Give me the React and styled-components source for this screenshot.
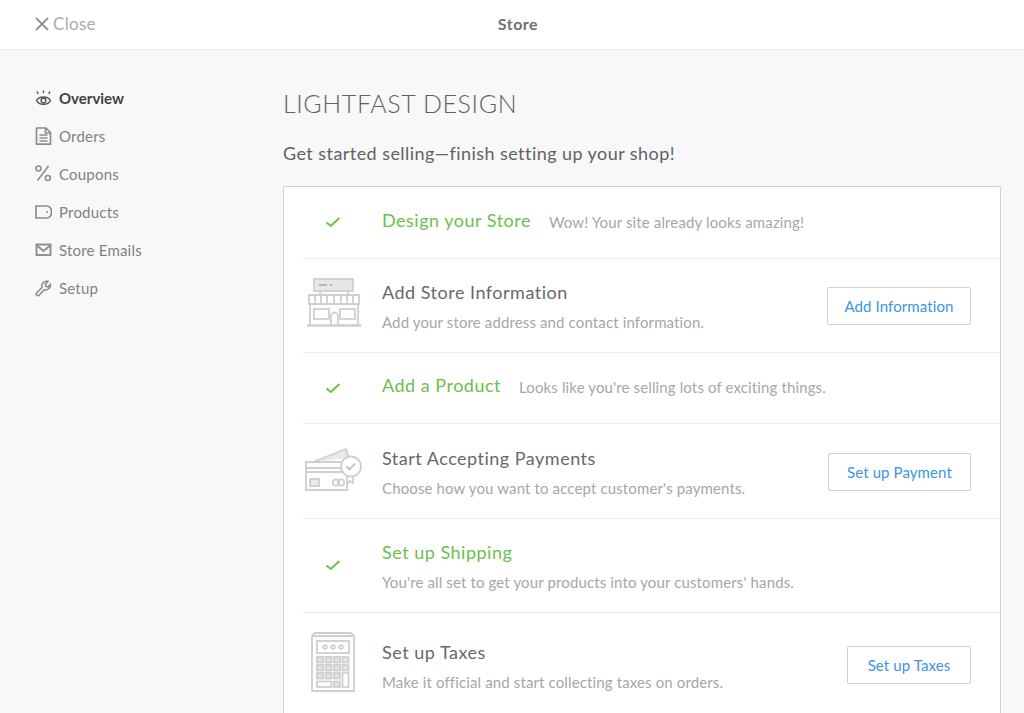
import React from "react";
import styled, { createGlobalStyle } from "styled-components";

const Global = createGlobalStyle`
  html, body { margin: 0; padding: 0; height: 713px; overflow: hidden; background: #f8f8f9; }
  body { font-family: "Lato", "Open Sans", sans-serif; -webkit-font-smoothing: antialiased; }
  #root { height: 713px; overflow: hidden; }
`;
const Page = styled.div`display:flex;flex-direction:column;height:713px;overflow:hidden;`;
const Header = styled.header`
  flex: none; background: #fff; border-bottom: 1px solid #ebecec; position: relative;
  display: flex; align-items: center; justify-content: center; padding: 0 0 3px 12px; box-sizing: content-box;
  height: 46px;
`;
const CloseLink = styled.div`
  position: absolute; left: 35px; top: 0; height: 47px; display: flex; align-items: center; gap: 4px;
  color: #a9abad; font-size: 17px; letter-spacing: .3px;
`;
const Title = styled.div`font-size: 16px; font-weight: 700; color: #6f7173; letter-spacing: .5px;`;
const Body = styled.div`display:flex;flex:1;min-height:0;`;
const Side = styled.nav`
  width: 283px; flex: none; padding: 29px 0 0 35px; box-sizing: border-box; display:flex; flex-direction:column;
`;
const NavItem = styled.div`
  height: 38px; display: flex; align-items: center; gap: 7px; font-size: 15px;
  letter-spacing: ${p => (p.$active ? "0" : ".2px")};
  color: ${p => (p.$active ? "#3f4244" : "#7f8285")}; font-weight: ${p => (p.$active ? 700 : 400)};
  svg { width: 17px; height: 18px; flex: none; }
`;
const Main = styled.main`flex:1;min-width:0;padding-right:23px;`;
const Shop = styled.h1`
  margin: 37px 0 0; font-size: 25px; line-height: 32px; font-weight: 300; color: #5f6265; letter-spacing: .6px;
`;
const Lead = styled.p`
  margin: 22px 0 0; font-size: 18px; line-height: 24px; color: #5f6265; letter-spacing: .44px;
`;
const Card = styled.section`
  margin-top: 21px; background: #fff; border: 1px solid #cfd1d3; border-bottom: 0; border-radius: 2px 2px 0 0; padding-left: 19px;
`;
const Row = styled.div`
  display: flex; align-items: center; height: ${p => p.$h}px; padding-right: 29px;
  border-bottom: 1px solid #ebecec; box-sizing: border-box;
  &:last-child { border-bottom: 0; }
`;
const IconCell = styled.div`
  width: 79px; flex: none; display:flex; align-items:center; box-sizing:border-box;
  padding-left: ${p => p.$pad || 0}px; padding-bottom: ${p => p.$lift || 0}px;
`;
const Text = styled.div`flex: 1; min-width: 0; padding-top: 1px;`;
const Inline = styled.div`display:flex;align-items:flex-start;gap:18px;margin:-3px 0 4px;`;
const Heading = styled.div`
  font-size: 18px; line-height: 24px; letter-spacing: .5px;
  color: ${p => (p.$done ? "#6cc04a" : "#66696c")};
`;
const Note = styled.div`
  font-size: 15px; line-height: 20px; color: #a5a7a9; letter-spacing: .13px; margin-top: ${p => p.$mt || 0}px;
`;
const Button = styled.button`
  height: 38px; padding: 0; width: ${p => p.$w}px; flex: none; background: #fff; border: 1px solid #ccd3dc; border-radius: 2px;
  color: #3a96e0; font: 400 15px "Lato", sans-serif; letter-spacing: .1px; margin-top: ${p => p.$down || 0}px;
`;

const Check = () => (
  <svg width="16" height="12" viewBox="0 0 16 12" fill="none" stroke="#6cc04a" strokeWidth="2">
    <path d="M1.5 6.5 L5.8 10 L14.5 2" />
  </svg>
);
const iconStroke = { fill: "none", stroke: "#8b8e91", strokeWidth: 1.6 };
const Eye = () => (
  <svg viewBox="0 0 17 18" {...iconStroke} stroke="#55585a">
    <path d="M1.5 11.5 C4 6.8 13 6.8 15.5 11.5 C13 16.6 4 16.6 1.5 11.5Z" strokeWidth="1.5" />
    <circle cx="8.5" cy="11.6" r="2.4" strokeWidth="1.4" />
    <path d="M8.5 1.5v2.6M2 2.5l1.2 2.4M15 2.5l-1.2 2.4" strokeWidth="1.4" />
  </svg>
);
const Doc = () => (
  <svg viewBox="0 0 17 18" {...iconStroke}>
    <path d="M1.5 1h9.5l4.5 4.5v11.7h-14z M10.5 1.2v4.8h5 M4.5 8h8M4.5 11h8M4.5 14h8" strokeWidth="1.7" />
  </svg>
);
const Percent = () => (
  <svg viewBox="0 0 17 18" {...iconStroke}>
    <circle cx="3.5" cy="3.5" r="2.5" /><circle cx="12.8" cy="13" r="2.5" /><path d="M13.5 1L2.5 15.5" strokeWidth="1.7" />
  </svg>
);
const Tag = () => (
  <svg viewBox="0 0 17 18" {...iconStroke}>
    <path d="M1 3h11c3 .4 4.5 3.2 4.5 6s-1.5 5.6-4.5 6H1z" strokeWidth="1.7" /><circle cx="12" cy="9" r="1" fill="#8b8e91" stroke="none" />
  </svg>
);
const Mail = () => (
  <svg viewBox="0 0 17 18" {...iconStroke} strokeWidth="1.9">
    <rect x="1.5" y="3.5" width="14" height="10.5" /><path d="M2 4.5l6.5 5.5 6.5-5.5" />
  </svg>
);
const Wrench = () => (
  <svg viewBox="0 0 17 18" {...iconStroke}>
    <path d="M1.3 14.2 L7 8.6 C5.8 4.8 9 1.4 13 2.4 L10.4 5.2 L10.8 7.4 L13 7.8 L15.3 5.4 C15.8 9 12.6 11.6 9.2 10.8 L4 16.4 C2.7 17.4 .4 15.6 1.3 14.2Z" />
  </svg>
);
const X = () => (
  <svg width="14" height="14" viewBox="0 0 14 14" stroke="#8f9193" strokeWidth="1.8"><path d="M1 1l12 12M13 1L1 13" /></svg>
);

const g = { fill: "none", stroke: "#cdcfd1", strokeWidth: 1.8 };
const StoreArt = () => (
  <svg width="54" height="50" viewBox="0 0 54 50" {...g}>
    <rect x="7" y="1" width="39" height="12" fill="#e6e7e8" />
    <path d="M12 7h8M23 7h2" stroke="#b5b7b9" />
    <path d="M13 13v4M41 13v4" />
    <path d="M2 17h50v9H2z" />
    <path d="M8 17v9M14 17v9M20 17v9M27 17v9M34 17v9M40 17v9M46 17v9" />
    <path d="M3 26v21M51 26v21" />
    <rect x="7" y="31" width="15" height="10" />
    <rect x="33" y="31" width="15" height="10" />
    <path d="M24 47V38a3 3 0 0 1 7 0v9" />
    <path d="M0 47.5h54" strokeWidth="2.6" />
  </svg>
);
const CardArt = () => (
  <svg width="58" height="44" viewBox="0 0 58 44" {...g}>
    <path d="M8 14L41 1l3 9" fill="#e8e9ea" />
    <path d="M1 14h41v28H1z" fill="#fff" />
    <path d="M1 20h41M1 24h41" />
    <rect x="5" y="31" width="9" height="7" fill="#e8e9ea" />
    <circle cx="31" cy="34.5" r="3.2" /><circle cx="36" cy="34.5" r="3.2" />
    <path d="M42 29v7l3-3 3 2v-7" fill="#fff"/>
    <circle cx="46" cy="18.5" r="10" fill="#fff" />
    <path d="M41.5 18.5l3 3 5.5-6" stroke="#b9bbbd" />
  </svg>
);
const Calc = () => (
  <svg width="44" height="60" viewBox="0 0 44 60" {...g}>
    <path d="M1 4l3-3h36l3 3v55H1z" />
    <path d="M2 4h40" />
    <rect x="6" y="9" width="32" height="12" />
    <circle cx="14" cy="15" r="1.8" /><circle cx="22" cy="15" r="1.8" /><circle cx="30" cy="15" r="1.8" />
    {[25, 33].map(y => [6, 14.5, 23, 31.5].map(x => <rect key={x + "-" + y} x={x} y={y} width="6" height="5.5" fill="#e2e3e4" />))}
    {[6, 14.5, 23].map(x => <rect key={x} x={x} y="41" width="6" height="5.5" fill="#e2e3e4" />)}
    <rect x="31.5" y="41" width="6" height="14" />
    <rect x="6" y="49.5" width="14.5" height="5.5" />
    <rect x="23" y="49.5" width="6" height="5.5" fill="#e2e3e4" />
  </svg>
);

export default function App() {
  return (
    <>
      <Global />
      <Page>
        <Header>
          <CloseLink><X />Close</CloseLink>
          <Title>Store</Title>
        </Header>
        <Body>
          <Side>
            <NavItem $active><Eye />Overview</NavItem>
            <NavItem><Doc />Orders</NavItem>
            <NavItem><Percent />Coupons</NavItem>
            <NavItem><Tag />Products</NavItem>
            <NavItem><Mail />Store Emails</NavItem>
            <NavItem><Wrench />Setup</NavItem>
          </Side>
          <Main>
            <Shop>LIGHTFAST DESIGN</Shop>
            <Lead>Get started selling—finish setting up your shop!</Lead>
            <Card>
              <Row $h={72}>
                <IconCell $pad={22} $lift={2}><Check /></IconCell>
                <Text><Inline><Heading $done>Design your Store</Heading><Note $mt={4}>Wow! Your site already looks amazing!</Note></Inline></Text>
              </Row>
              <Row $h={94}>
                <IconCell $pad={4} $lift={6}><StoreArt /></IconCell>
                <Text><Heading>Add Store Information</Heading><Note $mt={8}>Add your store address and contact information.</Note></Text>
                <Button $w={144}>Add Information</Button>
              </Row>
              <Row $h={71}>
                <IconCell $pad={22}><Check /></IconCell>
                <Text><Inline><Heading $done>Add a Product</Heading><Note $mt={4}>Looks like you're selling lots of exciting things.</Note></Inline></Text>
              </Row>
              <Row $h={95}>
                <IconCell $pad={2} $lift={2}><CardArt /></IconCell>
                <Text><Heading>Start Accepting Payments</Heading><Note $mt={8}>Choose how you want to accept customer's payments.</Note></Text>
                <Button $w={143} $down={2}>Set up Payment</Button>
              </Row>
              <Row $h={94}>
                <IconCell $pad={22} $lift={2}><Check /></IconCell>
                <Text><Heading $done>Set up Shipping</Heading><Note $mt={8}>You're all set to get your products into your customers' hands.</Note></Text>
              </Row>
              <Row $h={104}>
                <IconCell $pad={8} $lift={6}><Calc /></IconCell>
                <Text><Heading>Set up Taxes</Heading><Note $mt={8}>Make it official and start collecting taxes on orders.</Note></Text>
                <Button $w={124}>Set up Taxes</Button>
              </Row>
            </Card>
          </Main>
        </Body>
      </Page>
    </>
  );
}
